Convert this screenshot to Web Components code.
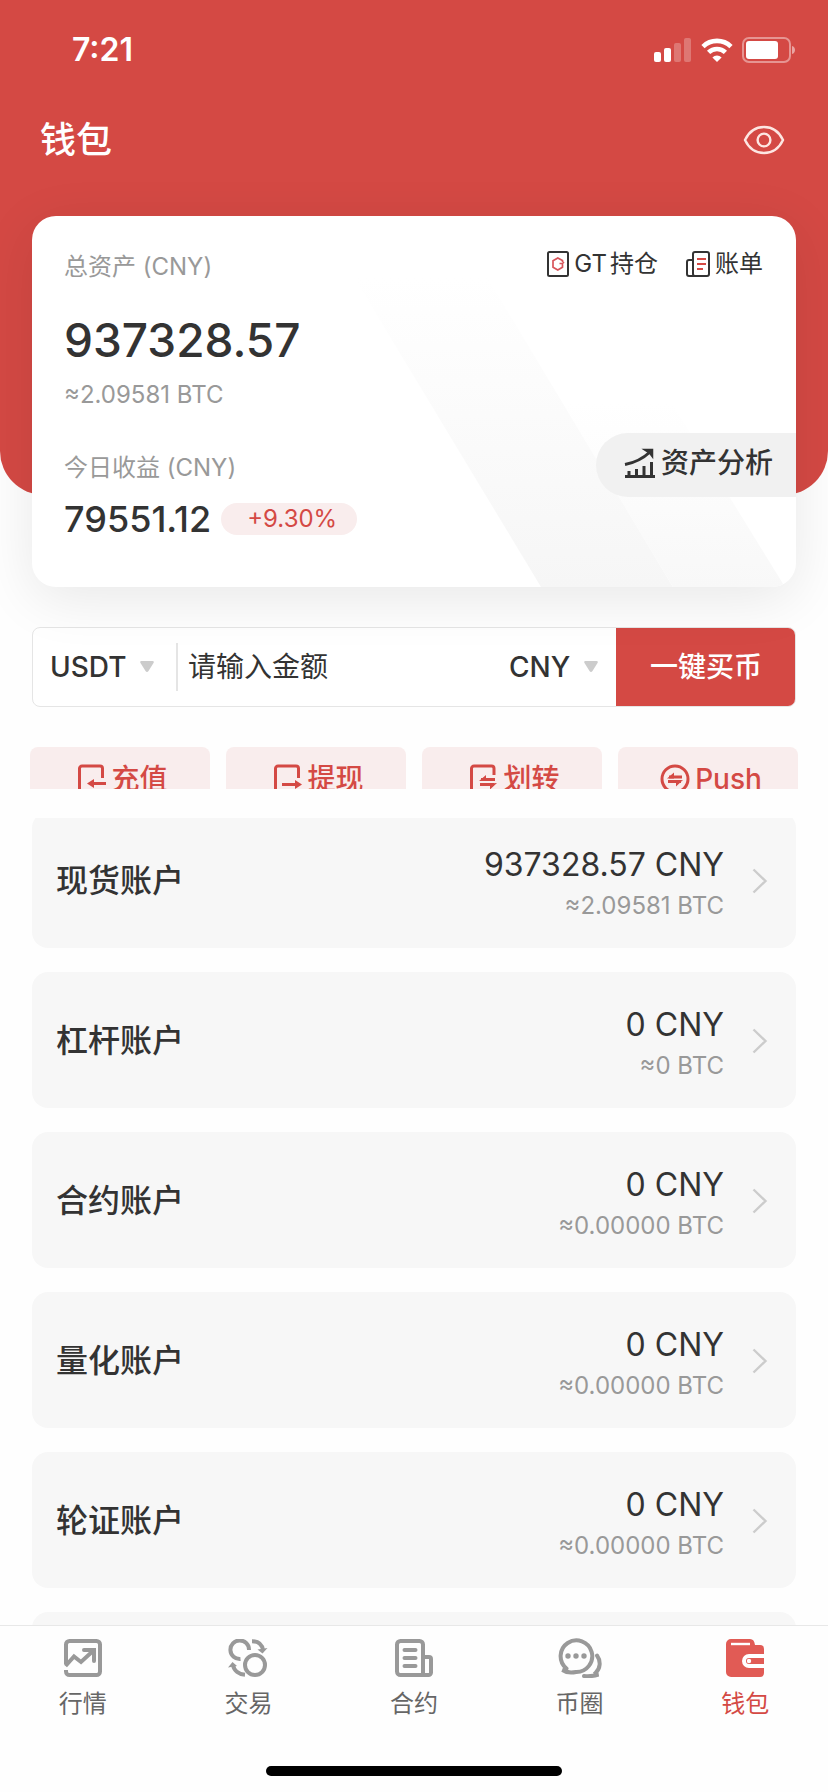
<!DOCTYPE html>
<html lang="zh-CN">
<head>
<meta charset="utf-8">
<meta name="viewport" content="width=device-width, initial-scale=1">
<title>钱包</title>
<style>
  :root {
    --red: #d44944;
    --red-soft: #f9eded;
    --ink: #333333;
    --muted: #999999;
    --panel: #f7f7f7;
  }
  body {
    margin: 0;
    background: #fefefe;
    color: var(--ink);
    font-family: Inter, "Noto Sans CJK SC", sans-serif;
    font-size: 24px;
    line-height: 36px;
  }
</style>
</head>
<body>
<wallet-page>
  <wallet-hero slot="hero" heading="钱包" time="7:21">
    <asset-card total="937328.57" btc="≈2.09581 BTC" profit="79551.12" rate="+9.30%"></asset-card>
  </wallet-hero>
  <buy-form slot="main"></buy-form>
  <action-row slot="main">
    <action-button icon="deposit">充值</action-button>
    <action-button icon="withdraw">提现</action-button>
    <action-button icon="transfer">划转</action-button>
    <action-button icon="push">Push</action-button>
  </action-row>
  <account-list slot="list">
    <account-row amount="937328.57 CNY" btc="≈2.09581 BTC">现货账户</account-row>
    <account-row amount="0 CNY" btc="≈0 BTC">杠杆账户</account-row>
    <account-row amount="0 CNY" btc="≈0.00000 BTC">合约账户</account-row>
    <account-row amount="0 CNY" btc="≈0.00000 BTC">量化账户</account-row>
    <account-row amount="0 CNY" btc="≈0.00000 BTC">轮证账户</account-row>
    <account-row></account-row>
  </account-list>
  <tab-bar slot="tabs">
    <tab-item icon="market">行情</tab-item>
    <tab-item icon="trade">交易</tab-item>
    <tab-item icon="contract">合约</tab-item>
    <tab-item icon="circle">币圈</tab-item>
    <tab-item icon="wallet" active>钱包</tab-item>
  </tab-bar>
</wallet-page>

<script>
const icons = {
  signal: `<svg width="38" height="24" viewBox="0 0 38 24" fill="#fff"><rect y="14" width="7" height="10" rx="2"/><rect x="10" y="10" width="7" height="14" rx="2"/><g opacity=".25"><rect x="20" y="5" width="7" height="19" rx="2"/><rect x="30" width="7" height="24" rx="2"/></g></svg>`,
  wifi: `<svg width="32" height="24" viewBox="0 0 32 24" fill="none" stroke="#fff" stroke-width="4.6"><path d="M2 8.6a20 20 0 0 1 28 0"/><path d="M7.6 14.4a12 12 0 0 1 16.8 0"/><path d="M16 24l-4.6-4.6a6.6 6.6 0 0 1 9.2 0z" fill="#fff" stroke="none"/></svg>`,
  battery: `<svg width="54" height="26" viewBox="0 0 54 26" fill="none"><rect x="1" y="1" width="47" height="24" rx="6" stroke="#fff" stroke-opacity=".42" stroke-width="2"/><rect x="4" y="4" width="32" height="18" rx="3" fill="#fff"/><path d="M50 9c4 1 4 7 0 8z" fill="#fff" fill-opacity=".5"/></svg>`,
  eye: `<svg width="42" height="30" viewBox="0 0 42 30" fill="none" stroke="#fde6e2" stroke-width="2.4"><path d="M2 15C6 6.500 13 2 21 2s15 4.500 19 13c-4 8.500-11 13-19 13S6 23.500 2 15z"/><circle cx="21" cy="15" r="6.400"/></svg>`,
  hold: `<svg width="22" height="26" viewBox="0 0 22 26" fill="none"><rect x="1" y="1" width="20" height="24" rx="1.500" stroke="#333" stroke-width="2"/><path d="M15.500 11V9.500L10.800 7 6 9.800v6.400l4.800 2.800 4.700-2.800v-3M12.500 12.500h3l1.500-1.500" stroke="#d8545a" stroke-width="1.700"/></svg>`,
  bill: `<svg width="24" height="26" viewBox="0 0 24 26" fill="none" stroke="#333" stroke-width="2"><rect x="7" y="1" width="16" height="24" rx="2"/><path d="M7 9H3a2 2 0 0 0-2 2v12a2 2 0 0 0 2 2h6"/><path d="M11 8h9M11 13h9M11 18h6" stroke="#d44944"/></svg>`,
  chart: `<svg width="32" height="30" viewBox="0 0 32 30" fill="none" stroke="#333" stroke-width="3"><path d="M1 28.500h30M5 28v-5M12.500 28v-7M20 28V18M27.500 28V14"/><path d="M1 16.500c11-2 18-6 25-12.500"/><path d="M20 1.500h8.500V9l-3-4z" fill="#333" stroke-width="1.500"/></svg>`,
  deposit: `<svg width="28" height="30" viewBox="0 0 28 30" fill="none" stroke="currentColor" stroke-width="3"><path d="M24.500 14V4.500a2.500 2.500 0 0 0-2.500-2.500H4a2.500 2.500 0 0 0-2.500 2.500V27H22"/><path d="M28 19.500H13"/><path d="M9 19.500l7-4.500v9z" fill="currentColor" stroke="none"/></svg>`,
  withdraw: `<svg width="28" height="30" viewBox="0 0 28 30" fill="none" stroke="currentColor" stroke-width="3"><path d="M24.500 14V4.500a2.500 2.500 0 0 0-2.500-2.500H4a2.500 2.500 0 0 0-2.500 2.500V27H22"/><path d="M8 20.500h16"/><path d="M28 20.500l-7-4.500v9z" fill="currentColor" stroke="none"/></svg>`,
  transfer: `<svg width="28" height="30" viewBox="0 0 28 30" fill="none" stroke="currentColor" stroke-width="3"><path d="M24 11V4.500a2.500 2.500 0 0 0-2.500-2.500H4a2.500 2.500 0 0 0-2.500 2.500V27H16"/><path d="M11 15.500h14M10 20.500h14"/><path d="M9 17l7-6v6zM27 19l-7 6.500v-6z" fill="currentColor" stroke="none"/></svg>`,
  push: `<svg width="30" height="30" viewBox="0 0 30 30" fill="none" stroke="currentColor" stroke-width="3"><circle cx="15" cy="15" r="13"/><path d="M9 13h13M8 17.500h13"/><path d="M7 14.500l7-6v6zM23 16l-7 6.500v-6z" fill="currentColor" stroke="none"/></svg>`,
  arrow: `<svg width="14" height="12" viewBox="0 0 14 12" fill="#ccc"><path d="M1.500 0h11q2 0 1 2L8.500 10q-1.500 2-3 0L.5 2q-1-2 1-2z"/></svg>`,
  chevron: `<svg width="16" height="26" viewBox="0 0 16 26" fill="none" stroke="#ccc" stroke-width="2.400"><path d="M1.500 1.500L13.500 13 1.500 24.500"/></svg>`,
  market: `<svg width="38" height="38" viewBox="0 0 38 38" fill="none" stroke="#999" stroke-width="4"><path d="M2 25V5.500A3.500 3.500 0 0 1 5.500 2h27A3.500 3.500 0 0 1 36 5.500v27a3.500 3.500 0 0 1-3.500 3.500h-27C3.500 36 2 34.500 2 32.500V31"/><path d="M1.500 27L10 17.500l7 5.500L29.500 11.500"/><path d="M20 11h10v11" stroke-linecap="round"/></svg>`,
  trade: `<svg width="40" height="38" viewBox="0 0 40 38" fill="none" stroke="#999" stroke-width="4"><circle cx="27" cy="26" r="10"/><path d="M12.500 20A9.300 9.300 0 1 1 21 11"/><path d="M24 2.200c6 0 10 3 11 9" /><path d="M39.500 9l-5 5.500-5-4z" fill="#999" stroke="none"/><path d="M17 35.800c-6-.500-11-4-12-10"/><path d="M0 28.500l4.500-5.500L9 27z" fill="#999" stroke="none"/></svg>`,
  contract: `<svg width="38" height="38" viewBox="0 0 38 38" fill="none" stroke="#999" stroke-width="4"><path d="M28 36V5.500A3.500 3.500 0 0 0 24.500 2h-19A3.500 3.500 0 0 0 2 5.500v27A3.500 3.500 0 0 0 5.500 36h28a2.500 2.500 0 0 0 2.500-2.500V20a2 2 0 0 0-2-2h-4"/><path d="M9.500 11h11M9.500 19h11M9.500 27h11" stroke-linecap="round"/></svg>`,
  circle: `<svg width="44" height="40" viewBox="0 0 44 40" fill="none" stroke="#999" stroke-width="4" stroke-linecap="round"><path d="M8.500 30.500A15.800 15.800 0 1 1 18 34c-5 1-10 .500-13.500-2q3 .500 4-1.500"/><g fill="#999" stroke="none"><circle cx="10" cy="18" r="2.700"/><circle cx="18" cy="18" r="2.700"/><circle cx="26" cy="18" r="2.700"/></g><path d="M39 17.500c4 5.500 3.500 13-1.500 17.500q1 1.500 3 1.500-8 2.500-14.500 1.500"/></svg>`,
  wallet: `<svg width="38" height="38" viewBox="0 0 38 38" fill="#e15b55"><path d="M5 0h19c3 0 4.500 2 5 6h5a4 4 0 0 1 4 4v24a4 4 0 0 1-4 4H5a5 5 0 0 1-5-5V5a5 5 0 0 1 5-5z"/><path d="M5 5h19" stroke="#fff" stroke-width="2.400"/><path d="M38 15H23a7 7 0 0 0 0 14h15v-4H23a3 3 0 0 1 0-6h15z" fill="#fff"/><circle cx="23" cy="22" r="2.200" fill="#fff"/></svg>`
}

const icon = (name) => (icons[name] || '').replace('<svg', '<svg aria-hidden="true"')

class BaseElement extends HTMLElement {
  connectedCallback () {
    if (this.shadowRoot) return
    this.attachShadow({ mode: 'open' })
    const tpl = document.createElement('template')
    tpl.innerHTML = `<style>*{box-sizing:border-box} svg{display:block;flex:none} button,select,input{font:inherit;color:inherit;margin:0;padding:0;border:0;background:none}</style>${this.render()}`
    this.shadowRoot.appendChild(tpl.content.cloneNode(true))
  }

  attr (name) {
    return this.getAttribute(name) || ''
  }
}

class WalletPage extends BaseElement {
  render () {
    return `
<style>
  :host {
    display: flex;
    flex-direction: column;
    height: 100vh;
    overflow: hidden;
  }
  main {
    display: flex;
    flex: 1;
    flex-direction: column;
    min-height: 0;
  }
  /* the asset card hangs 92px out of the hero */
  .tools {
    display: flex;
    flex-direction: column;
    gap: 40px;
    padding: 132px 30px 29px;
  }
</style>
<slot name="hero"></slot>
<main>
  <div class="tools"><slot name="main"></slot></div>
  <slot name="list"></slot>
</main>
<slot name="tabs"></slot>`
  }
}

class WalletHero extends BaseElement {
  render () {
    return `
<style>
  :host {
    background: var(--red);
    border-radius: 0 0 44px 44px;
    color: #fff;
    display: flex;
    flex: none;
    flex-direction: column;
  }
  .status {
    align-items: center;
    display: flex;
    font-size: 32px;
    font-weight: 600;
    height: 100px;
    justify-content: space-between;
    padding: 0 32px 0 72px;
  }
  .status div {
    align-items: center;
    display: flex;
    gap: 9px;
  }
  header {
    align-items: center;
    display: flex;
    height: 80px;
    justify-content: space-between;
    margin-bottom: 36px;
    padding: 0 43px 0 40px;
  }
  h1 {
    font-size: 36px;
    font-weight: 500;
    margin: 0;
  }
  button {
    cursor: pointer;
  }
  ::slotted(asset-card) {
    margin: 0 32px -92px;
  }
</style>
<div class="status">
  <span>${this.attr('time')}</span>
  <div>${icon('signal')}${icon('wifi')}${icon('battery')}</div>
</div>
<header>
  <h1>${this.attr('heading')}</h1>
  <button type="button" aria-label="隐藏金额">${icon('eye')}</button>
</header>
<slot></slot>`
  }
}

class AssetCard extends BaseElement {
  render () {
    return `
<style>
  :host {
    background: #fff;
    border-radius: 24px;
    box-shadow: 0 12px 56px rgba(0, 0, 0, .09);
    color: var(--ink);
    display: flex;
    justify-content: space-between;
    overflow: hidden;
    position: relative;
  }
  .stripes {
    bottom: 0;
    position: absolute;
    right: 0;
  }
  .figures {
    padding: 33px 0 48px 32px;
    position: relative;
  }
  .label, .btc {
    color: var(--muted);
  }
  .total {
    font-size: 46px;
    font-weight: 500;
    line-height: 64px;
    margin: 23px 0 5px;
  }
  .btc {
    margin-bottom: 37px;
  }
  .profit {
    align-items: center;
    display: flex;
    font-size: 36px;
    font-weight: 500;
    gap: 10px;
    line-height: 40px;
    margin-top: 13px;
  }
  .rate {
    background: var(--red-soft);
    border-radius: 16px;
    color: var(--red);
    font-size: 24px;
    font-weight: 400;
    line-height: 32px;
    padding: 0 20px 0 26px;
  }
  .side {
    align-items: flex-end;
    display: flex;
    flex-direction: column;
    padding-top: 30px;
    position: relative;
  }
  nav {
    display: flex;
    gap: 28px;
    padding-right: 33px;
    text-autospace: normal;
  }
  a {
    align-items: center;
    color: inherit;
    display: flex;
    gap: 5px;
    text-decoration: none;
  }
  button {
    align-items: center;
    background: #f1f1f1;
    border-radius: 32px 0 0 32px;
    cursor: pointer;
    display: flex;
    font-size: 28px;
    font-weight: 500;
    gap: 5px;
    height: 64px;
    margin-top: 151px;
    padding: 0 23px 4px 28px;
  }
</style>
<svg class="stripes" width="460" height="310" viewBox="-60 0 460 310" aria-hidden="true">
  <defs>
    <linearGradient id="fade" x1="0" y1="0" x2="0" y2="1">
      <stop offset="0" stop-color="#f6f6f6" stop-opacity="0"/>
      <stop offset="1" stop-color="#f6f6f6"/>
    </linearGradient>
    <linearGradient id="fade2" x1="0" y1="0" x2="0" y2="1">
      <stop offset="0" stop-color="#f8f8f8" stop-opacity="0"/>
      <stop offset="1" stop-color="#f8f8f8"/>
    </linearGradient>
  </defs>
  <path d="M-42 0H91L277 310H145z" fill="url(#fade)"/>
  <path d="M166 125H275L389 310H277z" fill="url(#fade2)"/>
</svg>
<div class="figures">
  <div class="label">总资产 (CNY)</div>
  <div class="total">${this.attr('total')}</div>
  <div class="btc">${this.attr('btc')}</div>
  <div class="label">今日收益 (CNY)</div>
  <div class="profit"><span>${this.attr('profit')}</span><span class="rate">${this.attr('rate')}</span></div>
</div>
<div class="side">
  <nav>
    <a href="#hold">${icon('hold')}<span>GT持仓</span></a>
    <a href="#bill">${icon('bill')}<span>账单</span></a>
  </nav>
  <button type="button">${icon('chart')}<span>资产分析</span></button>
</div>`
  }
}

class BuyForm extends BaseElement {
  render () {
    return `
<style>
  :host {
    display: block;
    font-size: 28px;
    margin: 0 2px;
  }
  form {
    background: #fff;
    border: 1px solid #e5e5e5;
    border-radius: 8px;
    display: flex;
    height: 80px;
    overflow: hidden;
  }
  .pick {
    align-items: center;
    display: flex;
    gap: 13px;
    padding: 0 18px;
  }
  .coin {
    padding: 0 22px 0 17px;
  }
  select {
    appearance: none;
    cursor: pointer;
    font-weight: 500;
    line-height: 40px;
  }
  input {
    border-left: 2px solid #e5e5e5;
    flex: 1;
    height: 48px;
    margin: auto 0;
    min-width: 0;
    padding-left: 10px;
  }
  input::placeholder {
    color: var(--ink);
    opacity: 1;
  }
  button {
    background: var(--red);
    color: #fff;
    cursor: pointer;
    font-weight: 500;
    margin: -1px -1px -1px 0;
    width: 180px;
  }
</style>
<form>
  <label class="pick coin"><select aria-label="币种"><option>USDT</option></select>${icon('arrow')}</label>
  <input type="text" aria-label="金额" placeholder="请输入金额">
  <label class="pick"><select aria-label="法币"><option>CNY</option></select>${icon('arrow')}</label>
  <button type="button">一键买币</button>
</form>`
  }
}

class ActionRow extends BaseElement {
  render () {
    return `
<style>
  /* scrolled under the account list, only the upper part stays visible */
  :host {
    align-items: flex-start;
    display: grid;
    gap: 16px;
    grid-template-columns: repeat(4, 1fr);
    height: 42px;
    overflow: hidden;
  }
</style>
<slot></slot>`
  }
}

class ActionButton extends BaseElement {
  render () {
    return `
<style>
  :host {
    display: block;
  }
  button {
    align-items: center;
    background: var(--red-soft);
    border-radius: 8px;
    color: var(--red);
    cursor: pointer;
    display: flex;
    font-size: 28px;
    font-weight: 500;
    gap: 5px;
    height: 64px;
    justify-content: center;
    padding-left: 6px;
    width: 100%;
  }
</style>
<button type="button">${icon(this.attr('icon'))}<slot></slot></button>`
  }
}

class AccountList extends BaseElement {
  render () {
    return `
<style>
  :host {
    display: block;
    flex: 1;
    min-height: 0;
    overflow: hidden;
    padding: 0 32px;
  }
  div {
    display: flex;
    flex-direction: column;
    gap: 24px;
    margin-top: -6px;
  }
</style>
<div><slot></slot></div>`
  }
}

class AccountRow extends BaseElement {
  render () {
    return `
<style>
  :host {
    display: block;
  }
  a {
    align-items: center;
    background: var(--panel);
    border-radius: 16px;
    color: inherit;
    display: flex;
    min-height: 136px;
    padding: 2px 28px 0 24px;
    text-decoration: none;
  }
  .name {
    flex: 1;
    font-size: 32px;
    font-weight: 500;
  }
  .sum {
    margin-right: 28px;
    padding-top: 4px;
    text-align: right;
  }
  .amount {
    font-size: 32px;
    line-height: 46px;
  }
  .btc {
    color: var(--muted);
  }
</style>
<a href="#account">
  <span class="name"><slot></slot></span>
  <div class="sum">
    <div class="amount">${this.attr('amount')}</div>
    <div class="btc">${this.attr('btc')}</div>
  </div>
  ${icon('chevron')}
</a>`
  }
}

class TabBar extends BaseElement {
  render () {
    return `
<style>
  :host {
    background: #fefefe;
    border-top: 1px solid #e8e8e8;
    display: block;
    flex: none;
    padding: 12px 0 16px;
  }
  nav {
    display: grid;
    grid-template-columns: repeat(5, 1fr);
    margin-bottom: 44px;
  }
  .home {
    background: #000;
    border-radius: 5px;
    height: 10px;
    margin: 0 auto;
    width: 296px;
  }
</style>
<nav><slot></slot></nav>
<div class="home"></div>`
  }
}

class TabItem extends BaseElement {
  render () {
    const color = this.hasAttribute('active') ? 'var(--red)' : '#666'
    return `
<style>
  :host {
    display: block;
  }
  a {
    align-items: center;
    color: ${color};
    display: flex;
    flex-direction: column;
    gap: 8px;
    text-decoration: none;
  }
  .icon {
    align-items: center;
    display: flex;
    height: 40px;
  }
</style>
<a href="#tab"><span class="icon">${icon(this.attr('icon'))}</span><slot></slot></a>`
  }
}

window.customElements.define('wallet-page', WalletPage)
window.customElements.define('wallet-hero', WalletHero)
window.customElements.define('asset-card', AssetCard)
window.customElements.define('buy-form', BuyForm)
window.customElements.define('action-row', ActionRow)
window.customElements.define('action-button', ActionButton)
window.customElements.define('account-list', AccountList)
window.customElements.define('account-row', AccountRow)
window.customElements.define('tab-bar', TabBar)
window.customElements.define('tab-item', TabItem)
</script>
</body>
</html>
